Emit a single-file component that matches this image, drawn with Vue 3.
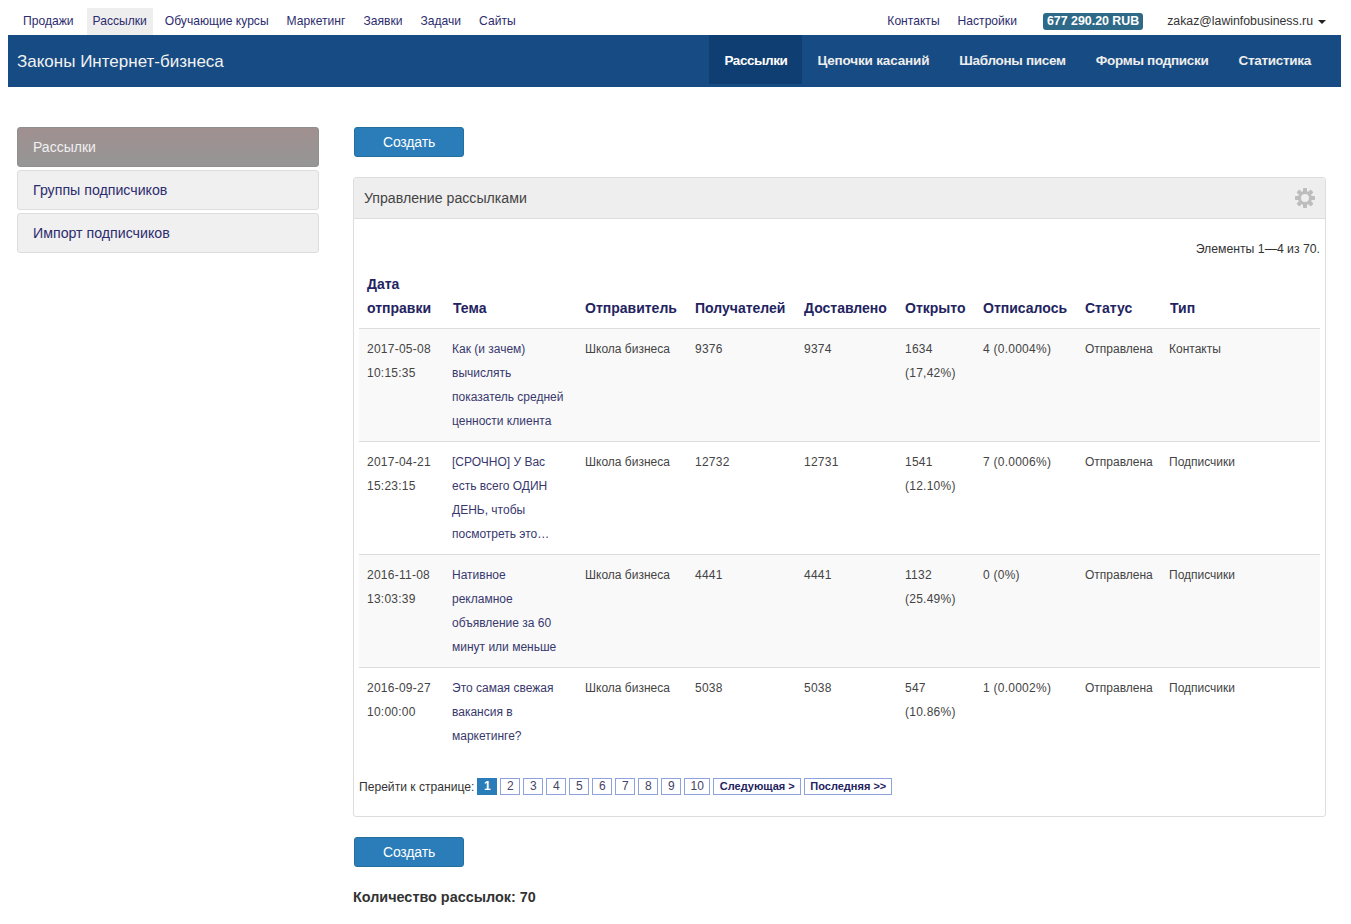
<script setup>
const topLeft = [
  { t: 'Продажи' }, { t: 'Рассылки', active: true }, { t: 'Обучающие курсы' },
  { t: 'Маркетинг' }, { t: 'Заявки' }, { t: 'Задачи' }, { t: 'Сайты' },
]
const subNav = ['Рассылки', 'Цепочки касаний', 'Шаблоны писем', 'Формы подписки', 'Статистика']
const side = ['Рассылки', 'Группы подписчиков', 'Импорт подписчиков']
const cols = [85, 133, 110, 109, 101, 78, 102, 84, 159]
const heads = ['Дата отправки', 'Тема', 'Отправитель', 'Получателей', 'Доставлено', 'Открыто', 'Отписалось', 'Статус', 'Тип']
const rows = [
  { date: '2017-05-08 10:15:35', subj: ['Как (и зачем)', 'вычислять', 'показатель средней', 'ценности клиента'], to: '9376', got: '9374', open: ['1634', '(17,42%)'], un: '4 (0.0004%)', type: 'Контакты' },
  { date: '2017-04-21 15:23:15', subj: ['[СРОЧНО] У Вас', 'есть всего ОДИН', 'ДЕНЬ, чтобы', 'посмотреть это…'], to: '12732', got: '12731', open: ['1541', '(12.10%)'], un: '7 (0.0006%)', type: 'Подписчики' },
  { date: '2016-11-08 13:03:39', subj: ['Нативное', 'рекламное', 'объявление за 60', 'минут или меньше'], to: '4441', got: '4441', open: ['1132', '(25.49%)'], un: '0 (0%)', type: 'Подписчики' },
  { date: '2016-09-27 10:00:00', subj: ['Это самая свежая', 'вакансия в', 'маркетинге?'], to: '5038', got: '5038', open: ['547', '(10.86%)'], un: '1 (0.0002%)', type: 'Подписчики' },
]
const pages = ['2', '3', '4', '5', '6', '7', '8', '9', '10']
const teeth = [0, 45, 90, 135]
</script>

<template>
  <div class="page">
    <div class="top">
      <nav class="top-left">
        <a v-for="i in topLeft" :key="i.t" class="top-link" :class="{ on: i.active }">{{ i.t }}</a>
      </nav>
      <div class="top-right">
        <a class="top-link">Контакты</a>
        <a class="top-link">Настройки</a>
        <span class="balance">677 290.20 RUB</span>
        <span class="user">zakaz@lawinfobusiness.ru<i class="caret"></i></span>
      </div>
    </div>

    <header class="bar">
      <div class="brand">Законы Интернет-бизнеса</div>
      <nav class="sub">
        <a v-for="(s, i) in subNav" :key="s" class="sub-link" :class="{ on: i === 0 }">{{ s }}</a>
      </nav>
    </header>

    <div class="content">
      <aside class="side">
        <a v-for="(s, i) in side" :key="s" class="side-item" :class="{ on: i === 0 }">{{ s }}</a>
      </aside>

      <main class="main">
        <button class="btn">Создать</button>

        <section class="panel">
          <div class="panel-head">
            <span>Управление рассылками</span>
            <svg class="gear" viewBox="0 0 20 20" width="20" height="20">
              <rect v-for="a in teeth" :key="a" x="8" y="0" width="4" height="20" rx="0.800" fill="#bdbdbd" :transform="`rotate(${a} 10 10)`" />
              <circle cx="10" cy="10" r="5.500" fill="none" stroke="#bdbdbd" stroke-width="3" />
              <circle cx="10" cy="10" r="4" fill="#eee" />
            </svg>
          </div>
          <div class="panel-body">
            <div class="summary">Элементы 1—4 из 70.</div>
            <table class="grid">
              <colgroup>
                <col v-for="(w, i) in cols" :key="i" :style="{ width: w + 'px' }" />
              </colgroup>
              <thead>
                <tr>
                  <th v-for="h in heads" :key="h">{{ h }}</th>
                </tr>
              </thead>
              <tbody>
                <tr v-for="r in rows" :key="r.date">
                  <td class="num">{{ r.date }}</td>
                  <td class="subj"><div v-for="l in r.subj" :key="l">{{ l }}</div></td>
                  <td>Школа бизнеса</td>
                  <td class="num">{{ r.to }}</td>
                  <td class="num">{{ r.got }}</td>
                  <td class="num"><div v-for="l in r.open" :key="l">{{ l }}</div></td>
                  <td class="num">{{ r.un }}</td>
                  <td>Отправлена</td>
                  <td>{{ r.type }}</td>
                </tr>
              </tbody>
            </table>
            <div class="pager">
              <span class="pager-label">Перейти к странице:</span>
              <span class="pg cur">1</span>
              <a v-for="p in pages" :key="p" class="pg" :class="{ wide: p === '10' }">{{ p }}</a>
              <a class="pg txt">Следующая &gt;</a>
              <a class="pg txt">Последняя &gt;&gt;</a>
            </div>
          </div>
        </section>

        <button class="btn">Создать</button>
        <div class="count">Количество рассылок: 70</div>
      </main>
    </div>
  </div>
</template>

<style>
html, body { margin: 0; background: #fff; }
</style>

<style scoped>
.page {
  padding: 0 10px 0 8px;
  font-family: "Liberation Sans", Arial, sans-serif;
  font-size: 12px;
  color: #333;
}
.top { height: 35px; display: flex; justify-content: space-between; }
.top-left { display: flex; padding: 8px 0 0 9px; }
.top-left .top-link:first-child { margin-right: 7px; }
.top-right { display: flex; padding: 8px 15px 0 0; align-items: flex-start; }
.top-link {
  color: #2d2c6e;
  height: 27px;
  line-height: 26px;
  padding: 0 6px;
  margin-right: 6px;
  font-size: 12.1px;
}
.top-link.on { background: #eee; }
.balance {
  margin: 5px 24px 0 14px;
  background: #2e6a88;
  color: #fff;
  font-weight: bold;
  font-size: 12.4px;
  line-height: 17px;
  height: 17px;
  padding: 0 4px;
  border-radius: 3px;
}
.user { line-height: 26px; font-size: 12.3px; color: #333; }
.caret {
  display: inline-block;
  width: 0;
  height: 0;
  margin-left: 5px;
  vertical-align: middle;
  border-top: 4px solid #222;
  border-left: 4px solid transparent;
  border-right: 4px solid transparent;
}
.bar {
  height: 52px;
  background: #164b83;
  display: flex;
  justify-content: space-between;
}
.brand { color: #f2f2f2; font-size: 17px; line-height: 53px; padding-left: 9px; }
.sub { display: flex; padding-right: 15px; }
.sub-link {
  height: 49px;
  line-height: 51px;
  padding: 0 15px;
  color: #eee;
  font-size: 13.500px;
  font-weight: bold;
  letter-spacing: -0.3px;
}
.sub-link:nth-child(2) { letter-spacing: -0.17px; }
.sub-link.on { background: #0f3e72; color: #fff; letter-spacing: -0.45px; }
.content { display: flex; padding: 40px 0 0 9px; }
.side { width: 302px; margin-right: 34px; display: flex; flex-direction: column; gap: 3px; flex: none; }
.side-item {
  height: 40px;
  box-sizing: border-box;
  border: 1px solid #ddd;
  border-radius: 3px;
  background: #f0f0f0;
  color: #2d2c6e;
  font-size: 14.200px;
  line-height: 38px;
  padding-left: 15px;
}
.side-item.on {
  background: linear-gradient(#a09090, #969696);
  border-color: #8f8f8f;
  color: #f0f0f0;
  font-size: 14px;
}
.main { width: 973px; flex: none; }
.btn {
  display: block;
  width: 110px;
  height: 30px;
  margin-left: 1px;
  padding: 0;
  border: 1px solid #23709f;
  border-radius: 3px;
  background: #2a7db8;
  color: #fff;
  font: 14px "Liberation Sans", Arial, sans-serif;
  letter-spacing: -0.15px;
}
.panel { margin: 20px 0; border: 1px solid #ddd; border-radius: 3px; padding-bottom: 21px; }
.panel-head {
  height: 41px;
  box-sizing: border-box;
  background: #eee;
  border-bottom: 1px solid #ddd;
  padding: 0 10px;
  display: flex;
  justify-content: space-between;
  align-items: center;
  font-size: 14.150px;
  color: #444;
}
.panel-body { padding: 0 5px; }
.summary { text-align: right; line-height: 20px; padding-top: 20px; font-size: 12.250px; }
.grid { border-collapse: collapse; table-layout: fixed; width: 961px; margin-top: 5px; }
th {
  text-align: left;
  vertical-align: bottom;
  padding: 8px;
  font-size: 14px;
  line-height: 24px;
  color: #23235f;
  border-bottom: 1px solid #ddd;
}
th:nth-child(2), th:nth-child(9) { padding-left: 9px; }
td {
  vertical-align: top;
  padding: 8px;
  line-height: 24px;
  color: #444;
  border-top: 1px solid #ddd;
}
thead + tbody tr:first-child td { border-top: 0; }
tbody tr:nth-child(odd) td { background: #f9f9f9; }
td.num { letter-spacing: 0.25px; }
.subj { color: #38386e; }
.pager { display: flex; align-items: center; margin-top: 22px; }
.pager-label { margin-right: 3px; font-size: 12.100px; }
.pg {
  box-sizing: border-box;
  width: 20px;
  height: 17px;
  line-height: 15px;
  border: 1px solid #8fa2e0;
  margin-right: 3px;
  text-align: center;
  color: #444466;
}
.pg.wide { width: 26px; }
.pg.cur { background: #2a7db8; border-color: #2a7db8; color: #fff; font-weight: bold; }
.pg.txt { width: 88px; font-size: 11px; font-weight: bold; color: #23235f; }
.count { margin-top: 22px; font-size: 14.400px; font-weight: bold; color: #333; }
</style>
